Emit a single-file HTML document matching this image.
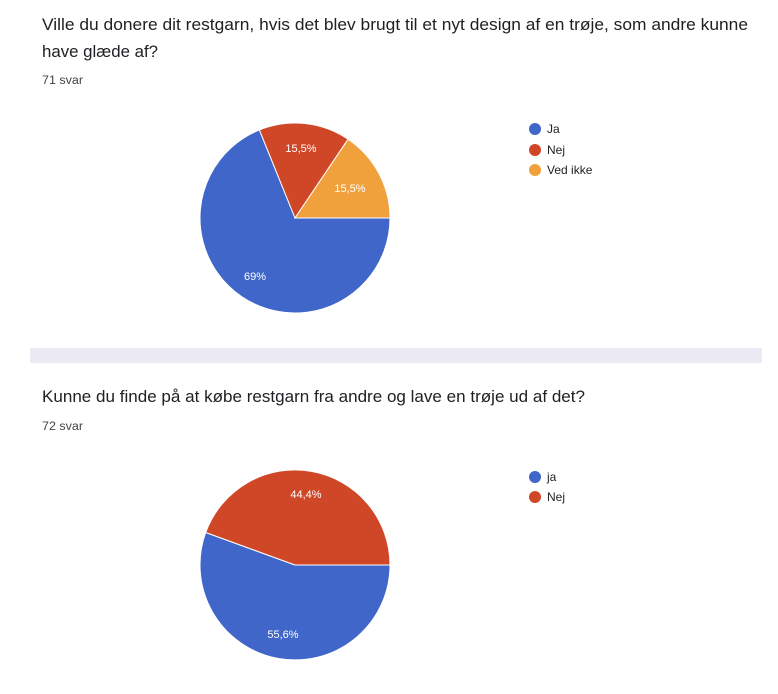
<!DOCTYPE html>
<html><head><meta charset="utf-8"><style>
html,body{margin:0;padding:0;background:#fff;width:778px;height:694px;overflow:hidden}
svg{display:block}
text{font-family:"Liberation Sans",Arial,sans-serif}
</style></head><body>
<svg width="778" height="694" viewBox="0 0 778 694">
<text x="42" y="30" font-size="16.5" fill="#202124" textLength="706" lengthAdjust="spacingAndGlyphs">Ville du donere dit restgarn, hvis det blev brugt til et nyt design af en trøje, som andre kunne</text>
<text x="42" y="57" font-size="16.5" fill="#202124" textLength="116" lengthAdjust="spacingAndGlyphs">have glæde af?</text>
<text x="42" y="84" font-size="11.5" fill="#444" textLength="41" lengthAdjust="spacingAndGlyphs">71 svar</text>

<path d="M295 218 L390 218 A95 95 0 1 1 259.4 129.9 Z" fill="#3f66c8" stroke="#fff" stroke-width="1"/>
<path d="M295 218 L259.4 129.9 A95 95 0 0 1 348.1 139.2 Z" fill="#d04727" stroke="#fff" stroke-width="1"/>
<path d="M295 218 L348.1 139.2 A95 95 0 0 1 390 218 Z" fill="#f1a13c" stroke="#fff" stroke-width="1"/>
<text x="301" y="152" font-size="11" fill="#fff" text-anchor="middle">15,5%</text>
<text x="350" y="192" font-size="11" fill="#fff" text-anchor="middle">15,5%</text>
<text x="255" y="280" font-size="11" fill="#fff" text-anchor="middle">69%</text>

<circle cx="535" cy="129" r="6" fill="#3f66c8"/>
<circle cx="535" cy="150" r="6" fill="#d04727"/>
<circle cx="535" cy="170" r="6" fill="#f1a13c"/>
<text x="547" y="133" font-size="12" fill="#222">Ja</text>
<text x="547" y="154" font-size="12" fill="#222">Nej</text>
<text x="547" y="174" font-size="12" fill="#222">Ved ikke</text>

<rect x="30" y="348" width="732" height="15" fill="#ecebf5"/>

<text x="42" y="402" font-size="16.5" fill="#202124" textLength="543" lengthAdjust="spacingAndGlyphs">Kunne du finde på at købe restgarn fra andre og lave en trøje ud af det?</text>
<text x="42" y="430" font-size="11.5" fill="#444" textLength="41" lengthAdjust="spacingAndGlyphs">72 svar</text>

<path d="M295 565 L390 565 A95 95 0 1 1 205.7 532.5 Z" fill="#3f66c8" stroke="#fff" stroke-width="1"/>
<path d="M295 565 L205.7 532.5 A95 95 0 0 1 390 565 Z" fill="#d04727" stroke="#fff" stroke-width="1"/>
<text x="306" y="498" font-size="11" fill="#fff" text-anchor="middle">44,4%</text>
<text x="283" y="638" font-size="11" fill="#fff" text-anchor="middle">55,6%</text>

<circle cx="535" cy="477" r="6" fill="#3f66c8"/>
<circle cx="535" cy="497" r="6" fill="#d04727"/>
<text x="547" y="481" font-size="12" fill="#222">ja</text>
<text x="547" y="501" font-size="12" fill="#222">Nej</text>
</svg>
</body></html>
